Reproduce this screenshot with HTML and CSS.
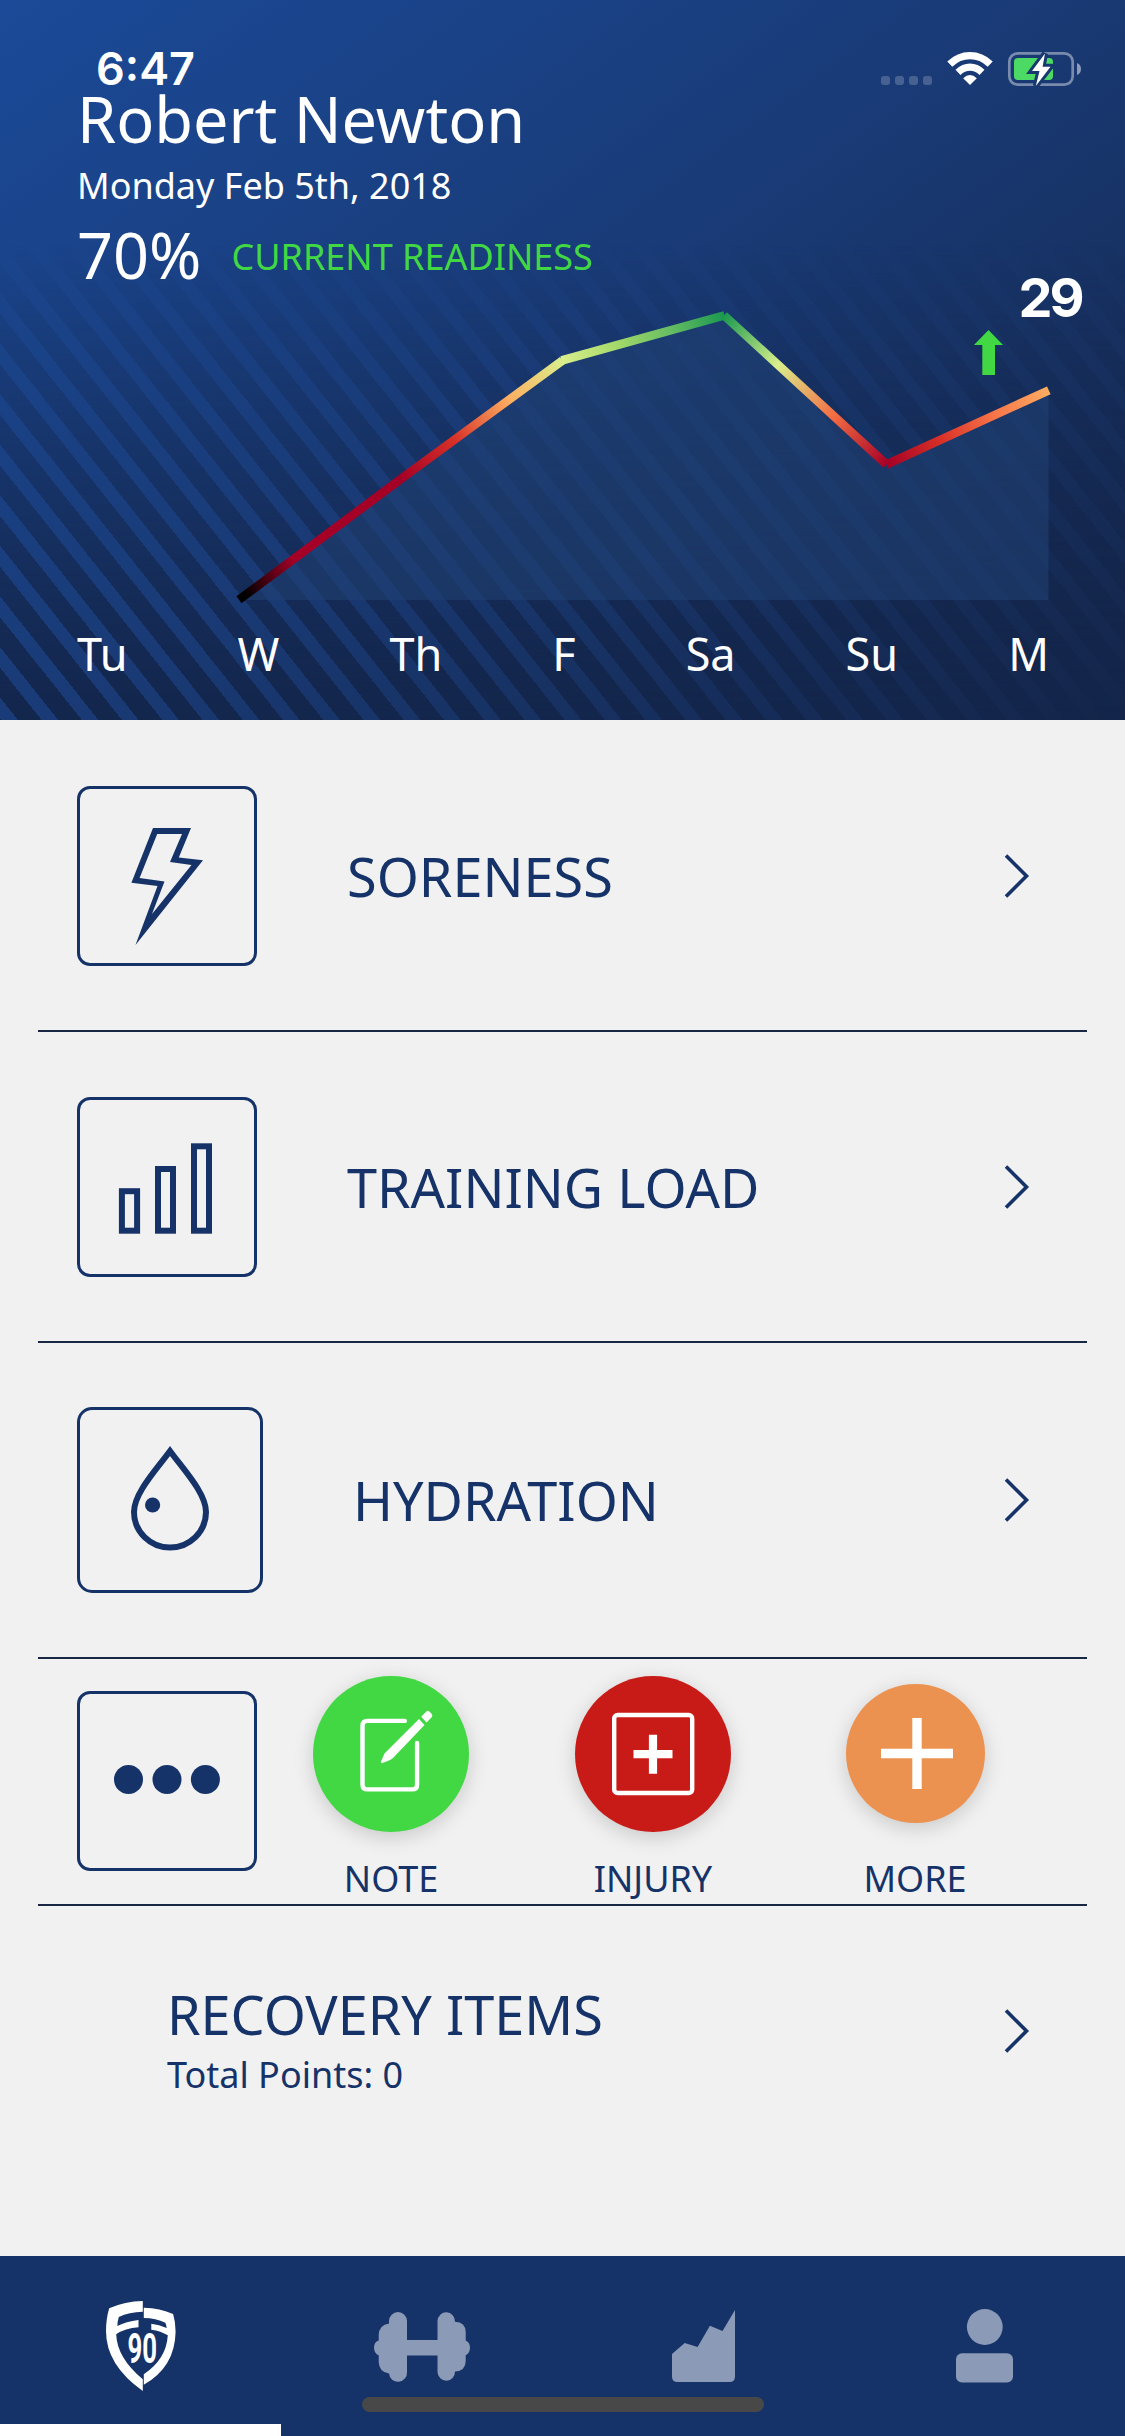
FILE: index.html
```html
<!DOCTYPE html>
<html lang="en">
<head>
  <meta charset="UTF-8" />
  <title>Readiness</title>
  <link rel="stylesheet" href="styles.css">
</head>
<body>
  <header class="header">
    <div class="status-bar">
      <span class="time">6:47</span>
      <svg class="status-icons" width="202" height="36" viewBox="880 51 202 36">
        <g fill="#fff" opacity=".2">
          <rect x="881" y="76" width="9" height="9" rx="3"/>
          <rect x="895" y="76" width="9" height="9" rx="3"/>
          <rect x="909" y="76" width="9" height="9" rx="3"/>
          <rect x="923" y="76" width="9" height="9" rx="3"/>
        </g>
        <g fill="none" stroke="#fff" stroke-width="7.2">
          <path d="M949.8 64.2 Q958.5 55.7 970 55.7 T990.2 64.2"/>
          <path d="M958 72.4 Q963.5 67.2 970 67.2 T982 72.4"/>
        </g>
        <path d="M963.2 78.2 Q970 72 976.8 78.2 L970 85 Z" fill="#fff"/>
        <rect x="1009.3" y="53.3" width="63.4" height="31.4" rx="8.5" fill="none" stroke="#fff" stroke-opacity=".42" stroke-width="2.7"/>
        <path d="M1077 63 Q1081 64.5 1081 69 T1077 75 Z" fill="#fff" fill-opacity=".5"/>
        <rect x="1014" y="58" width="39" height="22" rx="4" fill="#4cd964"/>
        <path d="M1045 53.5 L1032 71 H1039.5 L1035.8 86 L1050.5 66.7 H1042.6 Z" fill="#fff" stroke="#183870" stroke-width="6" paint-order="stroke"/>
      </svg>
    </div>

    <h1 class="name">Robert Newton</h1>
    <p class="date">Monday Feb 5th, 2018</p>
    <div class="readiness">
      <span class="percent">70%</span>
      <span class="readiness-label">CURRENT READINESS</span>
    </div>

    <svg class="chart" width="1125" height="338" viewBox="0 288 1125 338">
      <defs>
        <linearGradient id="seg1" gradientUnits="userSpaceOnUse" x1="239" y1="600" x2="400" y2="479">
          <stop offset=".04" stop-color="#000"/><stop offset=".34" stop-color="#a50026"/>
        </linearGradient>
        <linearGradient id="seg2" gradientUnits="userSpaceOnUse" x1="400" y1="479" x2="562" y2="360">
          <stop offset="0" stop-color="#a50026"/><stop offset=".33" stop-color="#d73027"/><stop offset=".67" stop-color="#fdae61"/><stop offset="1" stop-color="#d9ef8b"/>
        </linearGradient>
        <linearGradient id="seg3" gradientUnits="userSpaceOnUse" x1="562" y1="360" x2="724" y2="315">
          <stop offset="0" stop-color="#d9ef8b"/><stop offset=".33" stop-color="#a6d96a"/><stop offset=".67" stop-color="#66bd63"/><stop offset="1" stop-color="#1a9850"/>
        </linearGradient>
        <linearGradient id="seg4" gradientUnits="userSpaceOnUse" x1="724" y1="315" x2="887" y2="465">
          <stop offset="0" stop-color="#1a9850"/><stop offset=".33" stop-color="#d9ef8b"/><stop offset=".67" stop-color="#f46d43"/><stop offset="1" stop-color="#a50026"/>
        </linearGradient>
        <linearGradient id="seg5" gradientUnits="userSpaceOnUse" x1="887" y1="465" x2="1049" y2="390">
          <stop offset="0" stop-color="#a50026"/><stop offset=".33" stop-color="#d73027"/><stop offset=".67" stop-color="#f9764a"/><stop offset="1" stop-color="#fdae61"/>
        </linearGradient>
      </defs>
      <path class="chart-area" d="M239.5 600 L400.5 479 L561.5 360.5 L724 315.5 L886.5 464.5 L1048.5 390.5 V600 Z"/>
      <g fill="none" stroke-width="8.6">
        <path d="M239 599.8 L400.5 479.3" stroke="url(#seg1)"/>
        <path d="M400.5 479.3 L562.5 360.5" stroke="url(#seg2)"/>
        <path d="M561.5 360.5 L724.5 315.3" stroke="url(#seg3)"/>
        <path d="M724 315.3 L886.5 464.5" stroke="url(#seg4)"/>
        <path d="M886.5 464.5 L1048.8 390.3" stroke="url(#seg5)"/>
      </g>
      <path d="M988.5 330 L1003 345 H995 V375 H982.3 V345 H974 Z" fill="#41d844"/>
      <text class="score" x="1018.5" y="316.7">29</text>
    </svg>

    <div class="days">
      <span>Tu</span>
      <span>W</span>
      <span>Th</span>
      <span>F</span>
      <span>Sa</span>
      <span>Su</span>
      <span>M</span>
    </div>
  </header>

  <main class="list">
    <div class="row soreness">
      <div class="icon-box">
        <svg viewBox="3 3 174 174">
          <path fill-rule="evenodd" d="M76 42 H114 L101.8 71.5 L126 74.3 L58.5 159 L80.5 100 L54.4 96.7 Z M80.2 48 L62.6 92 L87.5 95.4 L75 128 L114.5 79 L93 76 L105 48 Z"/>
        </svg>
      </div>
      <span class="title">SORENESS</span>
      <svg class="chevron" viewBox="0 0 26 44"><path d="M2 1.5 L22.5 22 L2 42.5"/></svg>
    </div>

    <div class="row training">
      <div class="icon-box">
        <svg viewBox="3 3 174 174">
          <g fill="none" stroke="#163369" stroke-width="6">
            <rect x="44.9" y="94.2" width="15.2" height="39.5"/>
            <rect x="81" y="72" width="15" height="61.7"/>
            <rect x="117" y="49.3" width="15" height="84.4"/>
          </g>
        </svg>
      </div>
      <span class="title">TRAINING LOAD</span>
      <svg class="chevron" viewBox="0 0 26 44"><path d="M2 1.5 L22.5 22 L2 42.5"/></svg>
    </div>

    <div class="row hydration">
      <div class="icon-box large">
        <svg viewBox="3 3 180 180">
          <path fill="none" stroke="#163369" stroke-width="6" d="M93 44 C80 62 57 86 57 105 A36 35.5 0 0 0 129 105 C129 86 106 62 93 44 Z"/>
          <circle cx="75.6" cy="98" r="7.6"/>
        </svg>
      </div>
      <span class="title">HYDRATION</span>
      <svg class="chevron" viewBox="0 0 26 44"><path d="M2 1.5 L22.5 22 L2 42.5"/></svg>
    </div>

    <div class="row actions">
      <div class="icon-box">
        <svg viewBox="3 3 174 174">
          <circle cx="51.5" cy="88.5" r="14.5"/>
          <circle cx="90" cy="88.5" r="14.5"/>
          <circle cx="128.4" cy="88.5" r="14.5"/>
        </svg>
      </div>
      <div class="action-list">
        <div class="action">
          <div class="circle note">
            <svg width="156" height="156" viewBox="0 0 156 156">
              <path d="M91.8 44.9 H54.5 Q49.5 44.9 49.5 49.9 V108.4 Q49.5 113.4 54.5 113.4 H99.1 Q104.1 113.4 104.1 108.4 V67" fill="none" stroke="#fff" stroke-width="4.4" stroke-linecap="round"/>
              <path d="M106 43 L111.5 49 L80 82 Q76.5 85 68.5 87.2 Q67.3 86.8 68 85.5 L71.5 77.5 Z M108.2 40.7 L113.3 35.5 Q115 34.1 116.6 35.7 L118.6 37.8 Q120.2 39.5 118.7 41.2 L113.6 46.6 Z" fill="#fff"/>
            </svg>
          </div>
          <span>NOTE</span>
        </div>
        <div class="action">
          <div class="circle injury">
            <svg width="156" height="156" viewBox="0 0 156 156">
              <rect x="39.2" y="39" width="78" height="78" rx="3.5" fill="none" stroke="#fff" stroke-width="4.4"/>
              <path d="M58.5 78.2 H97.5 M78 58.7 V97.7" stroke="#fff" stroke-width="8.2"/>
            </svg>
          </div>
          <span>INJURY</span>
        </div>
        <div class="action">
          <div class="circle more">
            <svg width="139" height="139" viewBox="0 0 139 139">
              <path d="M35 69.5 H107 M71 34 V105" stroke="#fff" stroke-width="9.4"/>
            </svg>
          </div>
          <span>MORE</span>
        </div>
      </div>
    </div>

    <div class="row recovery">
      <div class="recovery-text">
        <span class="title">RECOVERY ITEMS</span>
        <span class="points">Total Points: 0</span>
      </div>
      <svg class="chevron" viewBox="0 0 26 44"><path d="M2 1.5 L22.5 22 L2 42.5"/></svg>
    </div>
  </main>

  <nav class="tabs">
    <a class="tab active">
      <svg width="70" height="92" viewBox="0 0 70 92">
        <path d="M36.8 1 Q19 1.2 3.2 8.3 Q0 19 0 31 Q0 65 36.8 91 V79.3 Q11 58 10.2 34.3 Q19 28.2 32.5 27.3 V20 Q20 21.5 11.4 26 Q11.4 21.5 12.8 17 Q23 12 36.8 11.7 Z"/>
        <path d="M37.8 7.7 Q54 8.2 67.1 14 Q69.6 22 69.6 31.7 Q69 67 37.8 84.7 V74.3 Q60.5 59 61.8 35.3 Q55 31 45.3 29.7 V23.7 Q53 24.5 60.7 28 Q60.5 25 59.3 22.7 Q50 18 37.8 18 Z"/>
        <text class="badge-number" x="21.4" y="63" textLength="29.5" lengthAdjust="spacingAndGlyphs">90</text>
      </svg>
    </a>
    <a class="tab">
      <svg width="96" height="69" viewBox="0 0 96 69">
        <path d="M33 28 V9 A9 9 0 0 0 15 9 V11.5 Q5 13 4.7 23 V28.5 Q0 30 0 35.7 T4.7 43.3 V50 Q5 60 15 61.5 A9 9 0 0 0 33 60 V43.5 H63.5 V60 A8.7 9 0 0 0 81 59.5 Q91.7 59 91.7 49 V43.3 Q96 41 96 35.7 T91.7 28.5 V20 Q91.5 10 81 9.7 A8.7 9 0 0 0 63.5 9 V28 Z"/>
      </svg>
    </a>
    <a class="tab">
      <svg width="63" height="72" viewBox="0 0 63 72">
        <path d="M0 44 L12.7 33 L25.6 37 L37.9 15.7 L50.5 21 L63 0 V66.5 Q63 72 57.5 72 H5.5 Q0 72 0 66.5 Z"/>
      </svg>
    </a>
    <a class="tab">
      <svg width="57" height="74" viewBox="0 0 57 74">
        <circle cx="28.8" cy="18" r="17.9"/>
        <rect y="44.2" width="57" height="29.4" rx="6"/>
      </svg>
    </a>
    <div class="home-indicator"></div>
  </nav>
</body>
</html>
```

FILE: styles.css
```css
* {
  box-sizing: border-box;
}
body {
  margin: 0;
  width: 1125px;
  height: 2436px;
  display: flex;
  flex-direction: column;
  background: #f1f1f1;
  color: #163369;
  font-family: "Noto Sans", "Open Sans", sans-serif;
  font-size: 36px;
}
svg {
  display: block;
  overflow: visible;
}

/* header */
.header {
  position: relative;
  height: 720px;
  color: #fff;
  background: linear-gradient(144deg, #1b4a98 0%, #193a75 50%, #142549 100%);
}
.header::before {
  content: "";
  position: absolute;
  inset: 0;
  background: repeating-linear-gradient(51.5deg, transparent 0 14px, #13254a 14px 32.5px, transparent 32.5px 31.5px);
  background: repeating-linear-gradient(51.5deg, #13254a 0 1px, transparent 1px 14px, #13254a 14px 31.5px);
  -webkit-mask-image: linear-gradient(to top, rgba(0,0,0,.95), transparent 66%);
  mask-image: linear-gradient(to top, rgba(0,0,0,.95), transparent 66%);
}
.header > * {
  position: relative;
}
.status-bar {
  display: flex;
  justify-content: space-between;
  height: 86px;
  padding: 51px 43px 0 96px;
}
.time {
  font-family: Inter, sans-serif;
  font-weight: 600;
  font-size: 45px;
  line-height: 36px;
}
.name {
  margin: 0 0 0 77px;
  font-size: 63px;
  font-weight: 400;
  line-height: 66px;
}
.date {
  margin: 10px 0 12px 77px;
  line-height: 48px;
}
.readiness {
  display: flex;
  padding-left: 77px;
  gap: 30px;
  height: 66px;
}
.percent {
  font-size: 63px;
  line-height: 66px;
}
.readiness-label {
  color: #41d844;
  line-height: 70px;
}
.chart-area {
  fill: rgba(33, 65, 117, .55);
}
.score {
  font-family: Inter, sans-serif;
  font-weight: 700;
  font-size: 54px;
  letter-spacing: -3px;
  fill: #fff;
}
.days {
  display: flex;
  justify-content: space-between;
  padding: 0 76px 0 77px;
  font-size: 45px;
  line-height: 56px;
}

/* rows */
.list {
  flex: 1;
  padding: 0 38px;
}
.row {
  display: flex;
  align-items: center;
  padding: 0 57px 0 39px;
  border-bottom: 2px solid #1a2744;
}
.soreness {
  height: 312px;
  padding-top: 2px;
}
.training {
  height: 311px;
}
.hydration {
  height: 316px;
}
.actions {
  height: 247px;
  align-items: flex-start;
  padding: 0;
  padding-left: 39px;
}
.recovery {
  align-items: flex-start;
  padding-top: 71px;
  padding-left: 129px;
  border: none;
}
.icon-box {
  width: 180px;
  height: 180px;
  border: 3px solid #163369;
  border-radius: 13px;
}
.icon-box.large {
  width: 186px;
  height: 186px;
  border-radius: 15px;
}
.icon-box svg {
  fill: #163369;
}
.title {
  margin-left: 90px;
  font-size: 54px;
  line-height: 74px;
}
.chevron {
  width: 26px;
  height: 44px;
  margin-left: auto;
  fill: none;
  stroke: #163369;
  stroke-width: 3.6;
}
.actions .icon-box {
  margin-top: 32px;
}
.action-list {
  display: flex;
  margin-left: 3px;
}
.action {
  width: 262px;
  display: flex;
  flex-direction: column;
  align-items: center;
  padding-top: 17px;
  line-height: 48px;
}
.circle {
  width: 156px;
  height: 156px;
  margin-bottom: 23px;
  border-radius: 50%;
  box-shadow: 0 5px 20px rgba(0, 0, 0, .17);
}
.note {
  background: #41d844;
}
.injury {
  background: #c81b18;
}
.more {
  width: 139px;
  height: 139px;
  margin: 8px 0 32px;
  background: #ec9250;
}
.recovery-text {
  display: flex;
  flex-direction: column;
}
.recovery .title {
  margin: 0;
}
.points {
  line-height: 48px;
}
.recovery .chevron {
  margin-top: 32px;
}

/* bottom tabs */
.tabs {
  position: relative;
  display: flex;
  height: 180px;
  background: #163369;
}
.tab {
  flex: 1;
  display: flex;
  align-items: center;
  justify-content: center;
  fill: #8b9ab6;
}
.tab.active {
  fill: #fff;
  box-shadow: inset 0 -12px #fff;
}
.badge-number {
  font-family: Roboto, sans-serif;
  font-weight: 700;
  font-size: 42px;
}
.home-indicator {
  position: absolute;
  left: 362px;
  bottom: 24px;
  width: 402px;
  height: 15px;
  border-radius: 8px;
  background: #484848;
}
```
